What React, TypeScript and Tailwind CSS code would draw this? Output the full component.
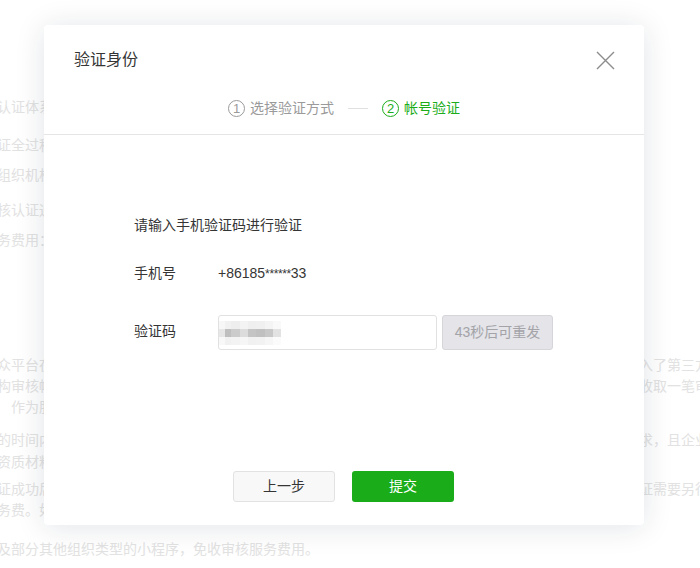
import React from "react";

type BgLine = { left: string; right?: string; mt: string };

const bgLines: BgLine[] = [
  { left: "认证体系由微信团队对公众号及小程序进行资质审核，确保帐号主体真实有效。", mt: "mt-0" },
  { left: "证全过程均在线上完成，提交资料后由第三方审核机构进行审核。", mt: "mt-[17px]" },
  { left: "组织机构代码证、营业执照等资质材料需真实有效。", mt: "mt-[9px]" },
  { left: "核认证通过后，帐号将获得认证标识及相关高级接口权限。", mt: "mt-[14px]" },
  { left: "务费用：每次认证需支付审核服务费用。", mt: "mt-[9px]" },
  {
    left: "众平台在认证过程中，为保证认证资料的真实性与合法性，引入了第三方",
    right: "入了第三方审核机构",
    mt: "mt-[104px]",
  },
  {
    left: "构审核帐号资质，第三方审核机构会对每次认证申请收取一笔审核服务费。",
    right: "收取一笔审核服务费",
    mt: "mt-0",
  },
  { left: "　作为服务费用的一部分，审核费用不予退还。", mt: "mt-0" },
  {
    left: "的时间内完成资料审核，如资料不符合要求，且企业未能及时补充材料",
    right: "求，且企业未能及时",
    mt: "mt-[12px]",
  },
  { left: "资质材料将被驳回，需重新提交认证申请。", mt: "mt-px" },
  {
    left: "证成功后，帐号有效期为一年，到期后重新认证需要另行支付审核服",
    right: "证需要另行支付审核",
    mt: "mt-[6px]",
  },
  { left: "务费。如需了解更多详情，请查看认证说明。", mt: "mt-0" },
  { left: "及部分其他组织类型的小程序，免收审核服务费用。", mt: "mt-[18px]" },
];

const mosaicCols = [0, 6, 12, 21, 29, 37, 46, 54, 62];
const mosaicRows = [
  ["#f7f7f7", "#f1f1f1", "#eeeeee", "#f3f3f3", "#efefef", "#f0f0f0", "#f4f4f4", "#f9f9f9"],
  ["#e6e6e6", "#bfbfbf", "#cbcbcb", "#dcdcdc", "#c4c4c4", "#c0c0c0", "#c8c8c8", "#e2e2e2"],
  ["#f8f8f8", "#f1f1f1", "#f3f3f3", "#f6f6f6", "#f1f1f1", "#f2f2f2", "#f6f6f6", "#fbfbfb"],
];

function Mosaic() {
  return (
    <svg width="62" height="24" viewBox="0 0 62 24" className="block">
      {mosaicRows.map((row, r) =>
        row.map((c, i) => (
          <rect
            key={`${r}-${i}`}
            x={mosaicCols[i]}
            y={r * 8}
            width={mosaicCols[i + 1] - mosaicCols[i]}
            height={8}
            fill={c}
          />
        ))
      )}
    </svg>
  );
}

function CloseIcon() {
  return (
    <svg width="19" height="19" viewBox="0 0 19 19" className="block">
      <path d="M1 1 L18 18 M18 1 L1 18" stroke="#8c8c8c" strokeWidth="1.4" fill="none" />
    </svg>
  );
}

export default function App() {
  return (
    <div className="relative w-[700px] h-[568px] overflow-hidden bg-white font-['Liberation_Sans','Noto_Sans_CJK_SC',sans-serif]">
      {/* background page content */}
      <div className="flex flex-col pt-[97px] -ml-[3px] text-[14px] text-[#e2e2e2]">
        {bgLines.map((l, i) => (
          <div key={i} className={`flex h-[21px] leading-[21px] whitespace-nowrap ${l.mt}`}>
            <div className="w-[642px] shrink-0 overflow-hidden">{l.left}</div>
            {l.right && <div className="shrink-0">{l.right}</div>}
          </div>
        ))}
      </div>

      {/* modal */}
      <div className="absolute left-[44px] top-[25px] w-[600px] h-[500px] bg-white rounded-[4px] shadow-[0_2px_30px_rgba(20,30,60,0.12)] flex flex-col">
        <div className="px-[30px] pt-[24px] pb-[15px] border-b border-[#e5e5e5]">
          <div className="flex items-center justify-between h-[22px]">
            <div className="text-[16px] leading-[22px] text-[#353535]">验证身份</div>
            <div className="-mr-[1px]">
              <CloseIcon />
            </div>
          </div>
          <div className="mt-[26px] h-[22px] flex items-center justify-center text-[14px] leading-[22px]">
            <div className="flex items-center text-[#9a9a9a]">
              <span className="w-[17px] h-[17px] rounded-full border border-[#9a9a9a] flex items-center justify-center text-[13px] leading-none">
                1
              </span>
              <span className="ml-[5px]">选择验证方式</span>
            </div>
            <div className="mx-[14px] w-[20px] h-px bg-[#e0e0e0]" />
            <div className="flex items-center text-[#1aad19]">
              <span className="w-[17px] h-[17px] rounded-full border border-[#1aad19] flex items-center justify-center text-[13px] leading-none">
                2
              </span>
              <span className="ml-[5px]">帐号验证</span>
            </div>
          </div>
        </div>

        <div className="flex-1 flex flex-col items-center">
          <div className="w-[420px] text-[14px] text-[#353535]">
            <div className="mt-[79px] leading-[22px]">请输入手机验证码进行验证</div>
            <div className="mt-[26px] flex leading-[22px]">
              <div className="w-[84px]">手机号</div>
              <div>
                +86185<span className="text-[12px] tracking-[-0.4px]">******</span>33
              </div>
            </div>
            <div className="mt-[30px] flex items-center h-[35px]">
              <div className="w-[84px] -mt-[4px] leading-[22px]">验证码</div>
              <div className="w-[219px] h-[35px] border border-[#e1e1e1] rounded-[3px] bg-white flex items-center">
                <Mosaic />
              </div>
              <div className="ml-[5px] w-[111px] h-[35px] rounded-[3px] border border-[#d5d5da] bg-[#e4e4e9] text-[#a3a3a8] flex items-center justify-center">
                43秒后可重发
              </div>
            </div>
          </div>

          <div className="mt-auto pb-[23px] pr-[1px] flex gap-[17px] text-[14px]">
            <div className="w-[102px] h-[31px] rounded-[3px] border border-[#e2e2e2] bg-[#f8f8f8] text-[#353535] flex items-center justify-center">
              上一步
            </div>
            <div className="w-[102px] h-[31px] rounded-[3px] bg-[#1aad19] text-white flex items-center justify-center">
              提交
            </div>
          </div>
        </div>
      </div>
    </div>
  );
}
